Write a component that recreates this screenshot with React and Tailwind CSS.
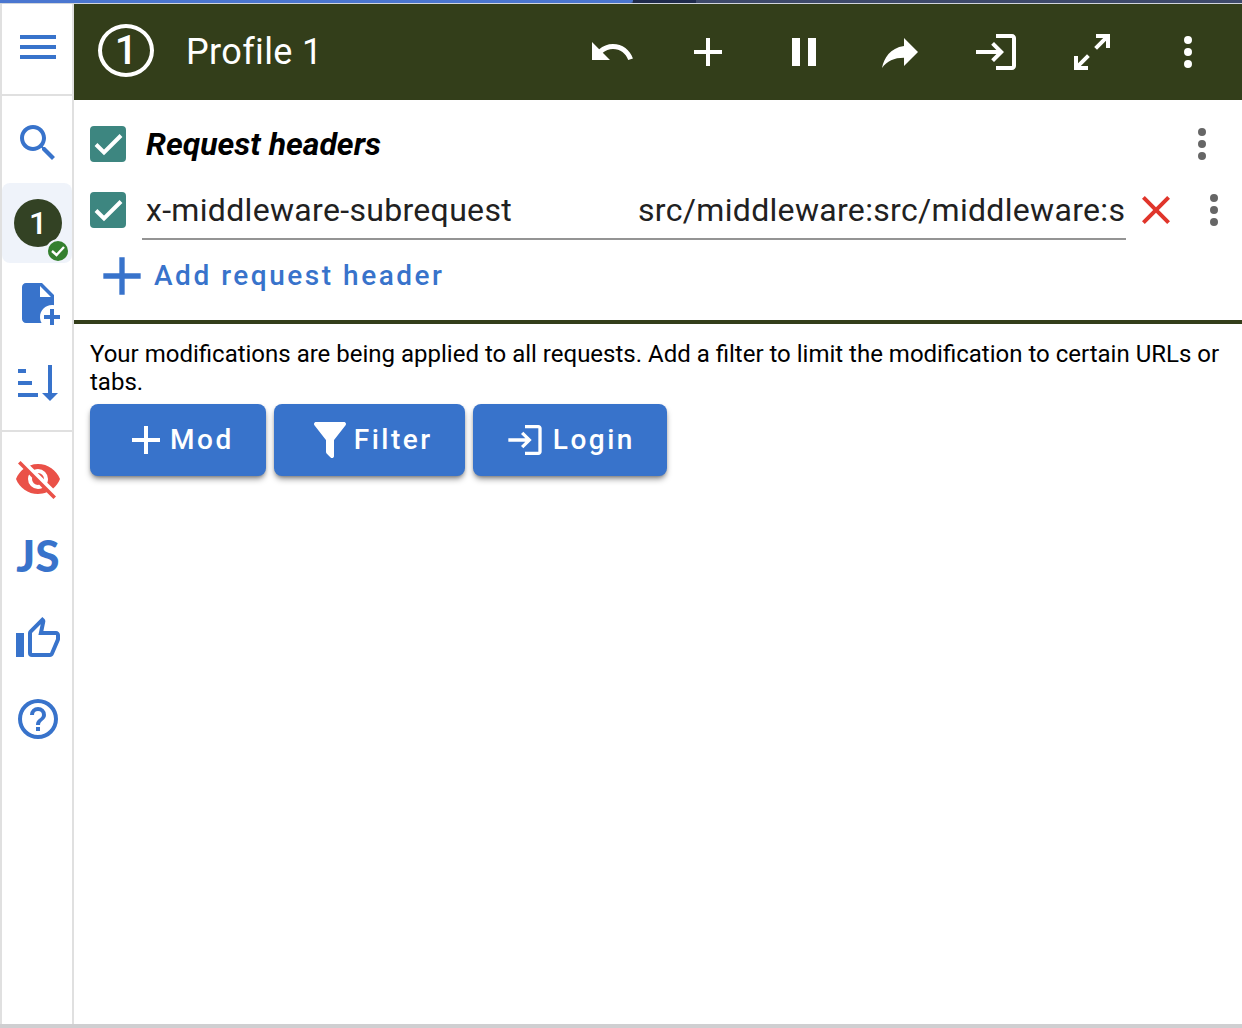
import React, { useState } from 'react';

// 24x24 icon paths
const ICONS = {
  menu: 'M3,6H21V8H3V6M3,11H21V13H3V11M3,16H21V18H3V16Z',
  search: 'M15.5 14h-.79l-.28-.27C15.41 12.59 16 11.11 16 9.5 16 5.91 13.09 3 9.5 3S3 5.91 3 9.5 5.91 16 9.5 16c1.61 0 3.09-.59 4.23-1.57l.27.28v.79l5 4.99L20.49 19l-4.99-5zm-6 0C7.01 14 5 11.99 5 9.5S7.01 5 9.5 5 14 7.01 14 9.5 11.99 14 9.5 14z',
  filePlus: 'M13 19C13 15.7 15.7 13 19 13C19.34 13 19.67 13.03 20 13.08V8L14 2H6C4.9 2 4 2.9 4 4V20C4 21.1 4.9 22 6 22H13.81C13.3 21.12 13 20.1 13 19M13 3.5L18.5 9H13V3.5M20 15V18H23V20H20V23H18V20H15V18H18V15H20Z',
  sort: 'M19 17H22L18 21L14 17H17V3H19V17M2 17H12V19H2V17M6 5V7H2V5H6M2 11H9V13H2V11Z',
  eyeOff: 'M11.83,9L15,12.16C15,12.11 15,12.05 15,12A3,3 0 0,0 12,9C11.94,9 11.89,9 11.83,9M7.53,9.8L9.08,11.35C9.03,11.56 9,11.77 9,12A3,3 0 0,0 12,15C12.22,15 12.44,14.97 12.65,14.92L14.2,16.47C13.53,16.8 12.79,17 12,17A5,5 0 0,1 7,12C7,11.21 7.2,10.47 7.53,9.8M2,4.27L4.28,6.55L4.73,7C3.08,8.3 1.78,10 1,12C2.73,16.39 7,19.5 12,19.5C13.55,19.5 15.03,19.2 16.38,18.66L16.81,19.08L19.73,22L21,20.73L3.27,3M12,7A5,5 0 0,1 17,12C17,12.64 16.87,13.26 16.64,13.82L19.57,16.75C21.07,15.5 22.27,13.86 23,12C21.27,7.61 17,4.5 12,4.5C10.6,4.5 9.26,4.75 8,5.2L10.17,7.35C10.74,7.13 11.35,7 12,7Z',
  thumbUp: 'M5,9V21H1V9H5M9,21A2,2 0 0,1 7,19V9C7,8.45 7.22,7.95 7.59,7.59L14.17,1L15.23,2.06C15.5,2.33 15.67,2.7 15.67,3.11L15.64,3.43L14.69,8H21C22.11,8 23,8.9 23,10V12C23,12.26 22.95,12.5 22.86,12.73L19.84,19.78C19.54,20.5 18.83,21 18,21H9M9,19H18.03L21,12V10H12.21L13.34,4.68L9,9.03V19Z',
  help: 'M11,18H13V16H11V18M12,2A10,10 0 0,0 2,12A10,10 0 0,0 12,22A10,10 0 0,0 22,12A10,10 0 0,0 12,2M12,20C7.59,20 4,16.41 4,12C4,7.59 7.59,4 12,4C16.41,4 20,7.59 20,12C20,16.41 16.41,20 12,20M12,6A4,4 0 0,0 8,10H10A2,2 0 0,1 12,8A2,2 0 0,1 14,10C14,12 11,11.75 11,15H13C13,12.75 16,12.5 16,10A4,4 0 0,0 12,6Z',
  undo: 'M12.5,8C9.85,8 7.45,9 5.6,10.6L2,7V16H11L7.38,12.38C8.77,11.22 10.54,10.5 12.5,10.5C16.04,10.5 19.05,12.81 20.1,16L22.47,15.22C21.08,11.03 17.15,8 12.5,8Z',
  plus: 'M19,13H13V19H11V13H5V11H11V5H13V11H19V13Z',
  pause: 'M14,19H18V5H14M6,19H10V5H6V19Z',
  share: 'M14 9V5l7 7-7 7v-4.1c-5 0-8.5 1.6-11 5.1 1-5 4-10 11-11z',
  login: 'M11 7L9.6 8.4l2.6 2.6H2v2h10.2l-2.6 2.6L11 17l5-5-5-5zm9 12h-8v2h8c1.1 0 2-.9 2-2V5c0-1.1-.9-2-2-2h-8v2h8v14z',
  expand: 'M10,21V19H6.41L10.91,14.5L9.5,13.09L5,17.59V14H3V21H10M14.5,10.91L19,6.41V10H21V3H14V5H17.59L13.09,9.5L14.5,10.91Z',
  dots: 'M12,16A2,2 0 0,1 14,18A2,2 0 0,1 12,20A2,2 0 0,1 10,18A2,2 0 0,1 12,16M12,10A2,2 0 0,1 14,12A2,2 0 0,1 12,14A2,2 0 0,1 10,12A2,2 0 0,1 12,10M12,4A2,2 0 0,1 14,6A2,2 0 0,1 12,8A2,2 0 0,1 10,6A2,2 0 0,1 12,4Z',
  close: 'M19,6.41L17.59,5L12,10.59L6.41,5L5,6.41L10.59,12L5,17.59L6.41,19L12,13.41L17.59,19L19,17.59L13.41,12L19,6.41Z',
  filter: 'M14,12V19.88C14.04,20.18 13.94,20.5 13.71,20.71C13.32,21.1 12.69,21.1 12.3,20.71L10.29,18.7C10.06,18.47 9.96,18.16 10,17.87V12H9.97L4.21,4.62C3.87,4.19 3.95,3.56 4.38,3.22C4.57,3.08 4.78,3 5,3V3H19V3C19.22,3 19.43,3.08 19.62,3.22C20.05,3.56 20.13,4.19 19.79,4.62L14.03,12H14Z',
};

const Icon = ({ name, className = 'size-12' }) => (
  <svg viewBox="0 0 24 24" fill="currentColor" aria-hidden="true" className={`shrink-0 ${className}`}>
    <path d={ICONS[name]} />
  </svg>
);

const SideButton = ({ label, children, className = 'text-[#3873cb]' }) => (
  <button aria-label={label} className={`flex h-20 w-full items-center justify-center pl-[2px] ${className}`}>
    {children}
  </button>
);

const Checkbox = ({ label, checked, onChange }) => (
  <span className="relative flex size-9 shrink-0">
    <input
      type="checkbox"
      aria-label={label}
      checked={checked}
      onChange={onChange}
      className="size-9 appearance-none rounded border-4 border-gray-500 checked:border-[#3d8680] checked:bg-[#3d8680]"
    />
    {checked && (
      <svg viewBox="0 0 36 36" aria-hidden="true" className="pointer-events-none absolute inset-0 size-9">
        <path d="M6 18.5L14 26.5L31 9.5" fill="none" stroke="#fff" strokeWidth="4" />
      </svg>
    )}
  </span>
);

const ActionButton = ({ children }) => (
  <button className="flex h-18 items-center rounded-lg bg-[#3873cb] px-8 text-[28px] font-medium tracking-[0.09em] text-white shadow-md shadow-black/40">
    {children}
  </button>
);

const TOOLBAR = [
  ['undo', 'Undo'],
  ['plus', 'Add'],
  ['pause', 'Pause'],
  ['share', 'Share'],
  ['login', 'Sign in'],
  ['expand', 'Open in tab'],
  ['dots', 'More'],
];

export default function App() {
  const [allOn, setAllOn] = useState(true);
  const [rowOn, setRowOn] = useState(true);
  const [name, setName] = useState('x-middleware-subrequest');
  const [value, setValue] = useState('src/middleware:src/middleware:s');

  return (
    <div className="flex min-h-screen flex-col bg-white font-[Roboto,sans-serif] text-black">
      {/* Browser strip */}
      <div className="flex h-1 border-b border-gray-300 bg-[#3e4a6b]">
        <div className="w-[51%] rounded-br-sm bg-[#4a76d0]" />
        <div className="w-[5%] bg-[#1f2b4d]" />
      </div>

      <div className="flex flex-1">
        {/* Sidebar */}
        <nav className="w-[74px] shrink-0 border-x-2 border-[#e0e0e0]">
          <div className="border-b-2 border-[#e0e0e0] pt-[3px] pb-[7px]">
            <SideButton label="Menu">
              <Icon name="menu" />
            </SideButton>
          </div>
          <div className="border-b-2 border-[#e0e0e0] py-[7px]">
            <SideButton label="Search">
              <Icon name="search" />
            </SideButton>
            <SideButton label="Profile 1" className="rounded-lg bg-[#eff3fa]">
              <span className="relative flex size-12 items-center justify-center rounded-full bg-[#334224] text-[32px] font-medium text-white">
                1
                <svg viewBox="0 0 24 24" aria-hidden="true" className="absolute -right-2 -bottom-4 size-6">
                  <circle cx="12" cy="12" r="12" fill="#eff3fa" />
                  <circle cx="12" cy="12" r="10" fill="#34802f" />
                  <path d="M6 12L10.5 16L18 8" fill="none" stroke="#fff" strokeWidth="2.4" />
                </svg>
              </span>
            </SideButton>
            <SideButton label="New profile">
              <Icon name="filePlus" />
            </SideButton>
            <SideButton label="Sort profiles">
              <Icon name="sort" />
            </SideButton>
          </div>
          <div className="py-[7px]">
            <SideButton label="Hide" className="text-[#ea5148]">
              <Icon name="eyeOff" />
            </SideButton>
            <SideButton label="JS">
              <span className="pb-2 font-[Lato,sans-serif] text-[44px] leading-none font-black">JS</span>
            </SideButton>
            <SideButton label="Rate">
              <Icon name="thumbUp" />
            </SideButton>
            <SideButton label="Help">
              <Icon name="help" />
            </SideButton>
          </div>
        </nav>

        <main className="min-w-0 flex-1">
          {/* Top bar */}
          <header className="flex h-24 items-center bg-[#333e1a] pr-[6px] pl-6 text-white">
            <span className="mb-[3px] flex h-[53px] w-14 items-center justify-center rounded-[50%] border-4 border-white text-[40px] font-medium">
              1
            </span>
            <h1 className="ml-8 flex-1 text-4xl tracking-[0.01em]">Profile 1</h1>
            {TOOLBAR.map(([icon, label]) => (
              <button key={icon} aria-label={label} className="flex size-24 items-center justify-center">
                <Icon name={icon} />
              </button>
            ))}
          </header>

          {/* Request headers */}
          <section className="border-b-4 border-[#333e1a] py-[11px] pl-4">
            <div className="flex h-[66px] items-center pr-4">
              <Checkbox label="Enable request headers" checked={allOn} onChange={() => setAllOn(!allOn)} />
              <h2 className="ml-5 flex-1 text-[32px] font-bold italic">Request headers</h2>
              <button aria-label="Request headers menu" className="text-[#666]">
                <Icon name="dots" />
              </button>
            </div>

            <div className="flex h-[66px] items-center pr-1">
              <Checkbox label="Enable header" checked={rowOn} onChange={() => setRowOn(!rowOn)} />
              <div className="ml-4 flex h-15 min-w-0 flex-1 border-b-2 border-[#949494] pt-[2px] text-[32px] tracking-[0.01em] text-[#212121]">
                <input
                  aria-label="Name"
                  value={name}
                  onChange={(e) => setName(e.target.value)}
                  className="w-1/2 min-w-0 bg-transparent pl-1 outline-none"
                />
                <input
                  aria-label="Value"
                  value={value}
                  onChange={(e) => setValue(e.target.value)}
                  className="w-1/2 min-w-0 bg-transparent pl-1 outline-none"
                />
              </div>
              <button aria-label="Delete header" className="ml-[6px] text-[#e0352b]">
                <Icon name="close" />
              </button>
              <button aria-label="Header menu" className="ml-[10px] text-[#666]">
                <Icon name="dots" />
              </button>
            </div>

            <button className="flex h-[66px] items-center text-[28px] font-medium tracking-[0.09em] text-[#3873cb]">
              <Icon name="plus" className="size-16" />
              Add request header
            </button>
          </section>

          {/* Filters hint and actions */}
          <section className="px-4 pt-4">
            <p className="text-2xl leading-7">
              Your modifications are being applied to all requests. Add a filter to limit the modification to certain URLs or tabs.
            </p>
            <div className="mt-2 flex gap-2">
              <ActionButton>
                <Icon name="plus" />
                Mod
              </ActionButton>
              <ActionButton>
                <Icon name="filter" />
                Filter
              </ActionButton>
              <ActionButton>
                <Icon name="login" className="mr-2 size-10" />
                Login
              </ActionButton>
            </div>
          </section>
        </main>
      </div>

      <div className="h-1 bg-[#cfcfd1]" />
    </div>
  );
}
